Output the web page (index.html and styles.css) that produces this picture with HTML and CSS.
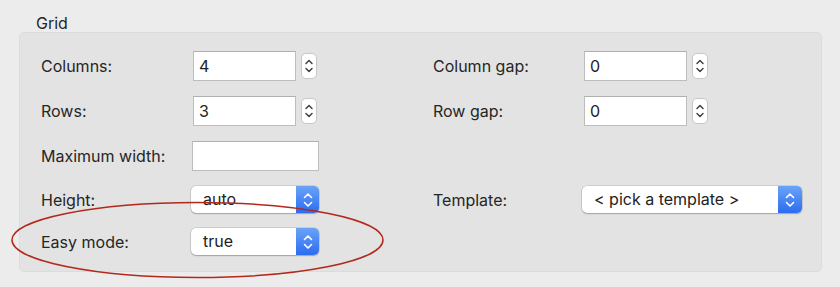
FILE: index.html
```
<!DOCTYPE html>
<html>
<head>
<meta charset="utf-8">
<title>Grid</title>
<link rel="stylesheet" href="styles.css">
</head>
<body>

<div class="groupTitle">Grid</div>

<div class="groupBox">
<div class="formGrid">
	<label class="fieldLabel">Columns:</label>
	<div class="control">
		<input type="text" class="numField" value="4">
		<span class="stepper"><svg width="10" height="18" viewBox="0 0 10 18"><path d="M2 6.5 L5 3.5 L8 6.5 M2 11.5 L5 14.5 L8 11.5"/></svg></span>
	</div>
	<label class="fieldLabel">Column gap:</label>
	<div class="control">
		<input type="text" class="numField" value="0">
		<span class="stepper"><svg width="10" height="18" viewBox="0 0 10 18"><path d="M2 6.5 L5 3.5 L8 6.5 M2 11.5 L5 14.5 L8 11.5"/></svg></span>
	</div>

	<label class="fieldLabel">Rows:</label>
	<div class="control">
		<input type="text" class="numField" value="3">
		<span class="stepper"><svg width="10" height="18" viewBox="0 0 10 18"><path d="M2 6.5 L5 3.5 L8 6.5 M2 11.5 L5 14.5 L8 11.5"/></svg></span>
	</div>
	<label class="fieldLabel">Row gap:</label>
	<div class="control">
		<input type="text" class="numField" value="0">
		<span class="stepper"><svg width="10" height="18" viewBox="0 0 10 18"><path d="M2 6.5 L5 3.5 L8 6.5 M2 11.5 L5 14.5 L8 11.5"/></svg></span>
	</div>

	<label class="fieldLabel">Maximum width:</label>
	<div class="control">
		<input type="text" class="textField" value="">
	</div>
	<div></div>
	<div></div>

	<label class="fieldLabel">Height:</label>
	<div class="control">
		<div class="popup"><span class="popupText">auto</span><span class="popupArrows"><svg width="12" height="20" viewBox="0 0 12 20"><path d="M2.5 7.5 L6 4 L9.5 7.5 M2.5 12.5 L6 16 L9.5 12.5"/></svg></span></div>
	</div>
	<label class="fieldLabel">Template:</label>
	<div class="control">
		<div class="popup popupWide"><span class="popupText">&lt; pick a template &gt;</span><span class="popupArrows"><svg width="12" height="20" viewBox="0 0 12 20"><path d="M2.5 7.5 L6 4 L9.5 7.5 M2.5 12.5 L6 16 L9.5 12.5"/></svg></span></div>
	</div>

	<label class="fieldLabel">Easy mode:</label>
	<div class="control">
		<div class="popup"><span class="popupText">true</span><span class="popupArrows"><svg width="12" height="20" viewBox="0 0 12 20"><path d="M2.5 7.5 L6 4 L9.5 7.5 M2.5 12.5 L6 16 L9.5 12.5"/></svg></span></div>
	</div>
	<div></div>
	<div></div>
</div>
</div>

<svg class="markup" width="400" height="90" viewBox="0 195 400 90">
	<ellipse cx="197.5" cy="240" rx="185.5" ry="37.5"/>
</svg>

</body>
</html>
```

FILE: styles.css
```
body {
	margin: 0;
	background-color: #ececec;
	font-family: Inter, "Liberation Sans", sans-serif;
	font-size: 16px;
	color: #262626;
	position: relative;
	height: 287px;
	overflow: hidden;
}
.groupTitle {
	padding: 14px 0 0 36px;
	height: 18px;
	line-height: 18px;
}
.groupBox {
	margin-left: 19px;
	width: 801px;
	height: 238px;
	background-color: #e3e3e3;
	border: 1px solid #dcdcdc;
	border-radius: 5px;
}
.formGrid {
	display: grid;
	grid-template-columns: 150px 242px 149px auto;
	grid-template-rows: 30px 30px 30px 27px 27px;
	row-gap: 15px;
	padding: 18px 0 0 21px;
	align-items: center;
}
.fieldLabel {
	line-height: 20px;
}
.control {
	display: flex;
	align-items: center;
}
input {
	font-family: Inter, "Liberation Sans", sans-serif;
	font-size: 16px;
	color: #222;
	box-sizing: border-box;
	height: 30px;
	border: 1px solid #bdbdbd;
	border-top-color: #b0b0b0;
	border-radius: 0;
	background: white;
	padding: 0 5px;
	outline: none;
}
.numField {
	width: 103px;
	margin-left: 2px;
}
.textField {
	width: 127px;
	margin-left: 1px;
}
.stepper {
	box-sizing: border-box;
	width: 16px;
	height: 26px;
	margin-left: 5px;
	background: white;
	border: 1px solid #c8c8c8;
	border-radius: 5px;
	display: flex;
	align-items: center;
	justify-content: center;
}
.stepper path {
	fill: none;
	stroke: #3a3a3a;
	stroke-width: 1.4;
	stroke-linecap: round;
	stroke-linejoin: round;
}
.popup {
	box-sizing: border-box;
	width: 128px;
	height: 27px;
	display: flex;
	background: white;
	border-radius: 5px;
	box-shadow: 0 0 0 0.5px rgba(0,0,0,0.18), 0 1px 1.5px rgba(0,0,0,0.22);
}
.popupWide {
	width: 220px;
}
.popupText {
	flex: 1;
	padding-left: 12px;
	line-height: 27px;
	color: #222;
}
.popupArrows {
	width: 23px;
	border-radius: 0 5px 5px 0;
	background: linear-gradient(#6aa3f8, #2c6cf0);
	display: flex;
	align-items: center;
	justify-content: center;
}
.popupWide .popupArrows {
	width: 24px;
}
.popupArrows path {
	fill: none;
	stroke: white;
	stroke-width: 1.6;
	stroke-linecap: round;
	stroke-linejoin: round;
}
.markup {
	position: absolute;
	left: 0;
	top: 195px;
}
.markup ellipse {
	fill: none;
	stroke: #b3281c;
	stroke-width: 1.5;
}
```
